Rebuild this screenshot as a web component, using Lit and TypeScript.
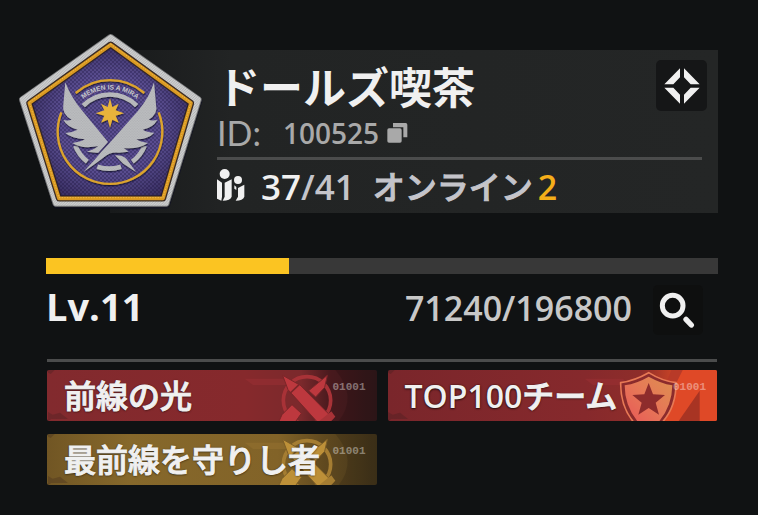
import { LitElement, html, css, svg, nothing } from "lit";
import { customElement, property } from "lit/decorators.js";

type Tone = "red" | "orange" | "gold";

@customElement("team-emblem")
class TeamEmblem extends LitElement {
  static styles = css`
    :host { display: block; }
    svg { display: block; width: 100%; height: 100%; overflow: visible; }
    .motto { font: 700 20px "Liberation Sans", sans-serif; fill: #c6c7c9; }
  `;
  render() {
    return html`
      <svg viewBox="24 24 552 528" role="img" aria-label="Team emblem">
        <defs>
          <pattern id="weave" width="12" height="12" patternUnits="userSpaceOnUse">
            <rect width="12" height="12" fill="#4d4081"></rect>
            <path d="M0 3h6M6 9h6" stroke="#5e5295" stroke-width="4"></path>
            <path d="M6 3h6M0 9h6" stroke="#3d3369" stroke-width="3"></path>
          </pattern>
          <pattern id="thread" width="8" height="8" patternUnits="userSpaceOnUse">
            <rect width="8" height="8" fill="#cfd0d0"></rect>
            <path d="M0 8L8 0" stroke="#a2a3a4" stroke-width="2"></path>
          </pattern>
          <pattern id="feather" width="8" height="8" patternUnits="userSpaceOnUse">
            <rect width="8" height="8" fill="#bcbec0"></rect>
            <path d="M0 2h4M4 6h4" stroke="#a5a7ab" stroke-width="2"></path>
          </pattern>
          <radialGradient id="shade" cx="50%" cy="52%" r="58%">
            <stop offset="0.55" stop-color="#1a1236" stop-opacity="0"></stop>
            <stop offset="1" stop-color="#1a1236" stop-opacity="0.6"></stop>
          </radialGradient>
          <filter id="relief" x="-10%" y="-10%" width="120%" height="120%">
            <feDropShadow dx="1" dy="4" stdDeviation="2" flood-color="#120c28" flood-opacity="0.75"></feDropShadow>
          </filter>
          <path id="mottoArc" d="M206 236A125 125 0 0 1 394 236"></path>
        </defs>
        <g stroke-linejoin="round" filter="url(#relief)">
          <path d="M302 36L566 223L469 536H137L36 223Z" fill="#77787a" stroke="#77787a" stroke-width="18"></path>
          <path d="M302 36L566 223L469 536H137L36 223Z" fill="url(#thread)" stroke="url(#thread)" stroke-width="13"></path>
          <path d="M302 59L543 234L459 520H147L58 234Z" fill="url(#weave)" stroke="#3b2c25" stroke-width="19"></path>
          <path d="M302 59L543 234L459 520H147L58 234Z" fill="url(#shade)" stroke="#d99820" stroke-width="11"></path>
          <path d="M302 57L543 232L459 518H147L58 232Z" fill="none" stroke="#f0bc4b" stroke-width="3" stroke-dasharray="4 4"></path>
        </g>
        <g fill="none" filter="url(#relief)">
          <path d="M154 262A157 157 0 1 0 446 262M197 204A157 157 0 0 1 403 204" stroke="#dba32d" stroke-width="7"></path>
          <path d="M220 242A112 112 0 0 1 380 242" stroke="url(#feather)" stroke-width="14"></path>
          <path d="M196 362A112 112 0 0 0 232 410M262 425A112 112 0 0 0 333 425M367 410A112 112 0 0 0 404 362" stroke="url(#feather)" stroke-width="14"></path>
        </g>
        <text class="motto"><textPath href="#mottoArc" startOffset="50%" text-anchor="middle">MEMEN IS A MIRA</textPath></text>
        <path filter="url(#relief)" fill="#e8b33a" d="M300 220L307 246L326 236L317 256L342 265L317 272L326 293L307 284L300 308L293 284L273 293L283 272L257 265L283 256L273 236L293 246Z"></path>
        <g fill="url(#feather)" filter="url(#relief)">
          <path d="M166 172Q183 218 218 259L294 351L267 384L230 380Q252 374 265 363Q215 373 187 354Q211 351 225 343Q184 340 166 324Q188 322 203 314Q173 307 160 285Q174 288 185 284Q155 267 160 239Z"></path>
          <path d="M315 391Q340 390 350 403L378 441L340 416Z"></path>
          <path d="M432 172Q418 218 383 259L298 355Q272 382 254 404L220 441Q254 418 280 398Q300 380 326 383L356 380L341 369Q387 373 414 354Q391 351 379 343Q415 342 433 323Q411 322 398 314Q428 309 442 285Q425 288 416 284Q445 266 438 239Z"></path>
        </g>
        <path d="M296 353L265 386" stroke="#3f3568" stroke-width="4"></path>
      </svg>`;
  }
}

@customElement("honor-tag")
class HonorTag extends LitElement {
  @property() label = "";
  @property() tone: Tone = "red";

  static styles = css`
    :host { display: block; min-width: 0; }
    .tag {
      position: relative; display: flex; align-items: center; height: 51px;
      padding: 0 17px; border-radius: 2px; overflow: hidden; color: #f0f0f0;
      font: 500 32px/50px "Open Sans", "Noto Sans CJK JP", sans-serif;
      white-space: nowrap;
    }
    .red { background: linear-gradient(90deg, #822a2e, #86292c 60%, #7b292c 77%, #48191d 86%, #32191b); }
    .orange { background: linear-gradient(90deg, #7a262b, #86292c 60%, #8e2d2a 77%, #d44825 89%, #e54a22 93%); }
    .gold { background: linear-gradient(90deg, #715624, #86682b 25%, #826328 70%, #60491f 84%, #43351b); }
    .art { position: absolute; right: 0; top: 0; width: 329px; height: 51px; }
    .text { position: relative; text-shadow: 0 0 2px #0009, 0 1px 2px #0009; -webkit-text-stroke: 1px #f0f0f0; }
    .latin { font-weight: 600; -webkit-text-stroke: 0; }
    .code {
      position: absolute; right: 11px; top: 10px; color: #ffffff66;
      font: 700 11px/14px "Liberation Mono", monospace;
    }
  `;

  private blades() {
    const main = this.tone === "gold" ? "#bd9038" : "#bd383e";
    const edge = this.tone === "gold" ? "#a57d32" : "#a83237";
    const gap = this.tone === "gold" ? "#7d5e27" : "#7b2629";
    return svg`
      <circle cx="777" cy="91" r="71" fill="none" stroke=${edge} stroke-width="11"></circle>
      <path d="M838 16L830 52L803 81L782 62Z" fill=${main} stroke=${gap} stroke-width="3"></path>
      <path d="M732 104L760 130L742 156H692L702 134Z" fill=${main} stroke=${gap} stroke-width="3"></path>
      <path d="M704 16L748 41L755 44L856 146L846 156H808L730 70L720 59Z" fill=${main} stroke=${gap} stroke-width="3"></path>
      <path d="M727 69L754 43" stroke=${gap} stroke-width="5"></path>
      <path d="M814 153L850 124L862 140L846 156Z" fill=${edge}></path>`;
  }

  private shield() {
    return svg`
      <path d="M808 153L884 0H990V153Z" fill="#df4927"></path>
      <path d="M808 153L884 0H850L790 153Z" fill="#b83a28"></path>
      <path d="M872 153L935 62V153Z" fill="#a83423"></path>
      <path d="M782 8Q822 33 864 38Q865 112 820 160H740Q697 112 698 38Q740 32 782 8Z" fill="#8b2b2c" stroke="#e77955" stroke-width="5"></path>
      <path d="M782 20Q818 40 853 46Q852 111 810 158H752Q710 111 710 46Q748 40 782 20Z" fill="url(#shieldFill)"></path>
      <path d="M782 39L795 73L831 75L803 98L813 134L782 114L751 134L761 98L733 75L769 73Z" fill="#8d2c2c"></path>`;
  }

  render() {
    const parts = this.label.split(/([A-Z0-9]+)/).filter(Boolean);
    return html`
      <div class="tag ${this.tone}">
        <svg class="art" viewBox="0 0 987 153" aria-hidden="true">
          <defs>
            <linearGradient id="shieldFill" x1="0" y1="1" x2="1" y2="0">
              <stop offset="0" stop-color="#e85757"></stop>
              <stop offset="0.5" stop-color="#e67757"></stop>
              <stop offset="1" stop-color="#dd9050"></stop>
            </linearGradient>
          </defs>
          <path d="M590 26H705L725 45H615Z" fill=${this.tone === "gold" ? "#95712f" : "#9b3034"} opacity="0.5"></path>
          <path d="M0 0H20L8 12L0 8ZM0 126L14 134L36 128L60 147H10L0 153Z" fill="#301c1c" opacity="0.25"></path>
          ${this.tone === "orange"
            ? nothing
            : svg`<path d="M862 0H987V153H872Q930 80 862 0Z" fill="#000" opacity="0.13"></path>`}
          ${this.tone === "orange" ? this.shield() : this.blades()}
        </svg>
        <span class="code">01001</span>
        <span class="text">${parts.map((p) => (/[A-Z0-9]/.test(p) ? html`<span class="latin">${p}</span>` : p))}</span>
      </div>`;
  }
}

@customElement("app-root")
class AppRoot extends LitElement {
  private points = 71240;
  private goal = 196800;
  private tags: { label: string; tone: Tone }[] = [
    { label: "前線の光", tone: "red" },
    { label: "TOP100チーム", tone: "orange" },
    { label: "最前線を守りし者", tone: "gold" },
  ];

  static styles = css`
    :host {
      display: block; box-sizing: border-box; min-height: 100vh;
      padding: 50px 40px 28px 46px; background: #101213; color: #f0f0f0;
      font-family: "Open Sans", "Noto Sans CJK JP", sans-serif;
      white-space: nowrap;
    }
    h1 { margin: 0; }
    button {
      display: grid; place-items: center; padding: 0; border: 0;
      color: #f0f0f0; background: none; flex: none; cursor: pointer;
    }
    svg { display: block; fill: currentColor; overflow: visible; }
    .card {
      position: relative; margin-left: 64px; padding: 10px 11px 0 107px;
      background: linear-gradient(90deg, #181a1b, #222424 20%, #242626);
    }
    .emblem {
      position: absolute; left: -92px; top: -17px; width: 184px; height: 176px;
    }
    .title { display: flex; justify-content: space-between; height: 51px; }
    h1 { font: 700 43px/58px "Liberation Sans", "Noto Sans CJK JP", sans-serif; }
    .square { width: 51px; height: 51px; border-radius: 5px; background: #151617; }
    .ident {
      display: flex; align-items: center; height: 49px; padding-bottom: 3px; box-sizing: border-box;
      margin-right: 5px; border-bottom: 3px solid #4b4c4c; color: #a9a9a9;
    }
    .key { font: 400 34px/40px Lato, sans-serif; width: 66px; }
    .id { font-size: 28px; line-height: 38px; font-weight: 600; }
    .copy { color: inherit; margin-left: 8px; }
    .members { display: flex; align-items: center; height: 53px; line-height: 48px; }
    .count { margin-left: 16px; font-size: 35px; font-weight: 600; }
    .dim { color: #c4c4ca; }
    .online { margin-left: 18px; font-size: 32px; font-weight: 500; color: #c4c4ca; -webkit-text-stroke: 1px #c4c4ca; }
    .now { margin-left: 5px; font-size: 34px; font-weight: 600; color: #f5ae19; }
    progress {
      display: block; appearance: none; width: 100%; height: 16px; margin-top: 45px;
      border: 0; background: #383838;
    }
    progress::-webkit-progress-bar { background: #383838; }
    progress::-webkit-progress-value { background: #fbc422; }
    .level {
      display: flex; align-items: flex-start; height: 50px; margin-top: 11px;
      padding-right: 15px;
    }
    .lv { flex: 1; font-size: 38px; line-height: 42px; font-weight: 700; }
    .points { font-size: 34px; line-height: 46px; font-weight: 600; color: #c8c8c8; }
    .search { width: 50px; height: 50px; margin-left: 21px; background: #0e0f0f; border-radius: 5px; }
    .tags {
      display: grid; grid-template-columns: 1fr 1fr; gap: 13px 11px;
      margin: 24px 1px 0; padding-top: 8px; border-top: 3px solid #4b4c4c;
    }
  `;

  render() {
    return html`
      <main>
        <section class="card">
          <team-emblem class="emblem"></team-emblem>
          <div class="title">
            <h1>ドールズ喫茶</h1>
            <button class="square" aria-label="Details">
              <svg width="36" height="36" viewBox="0 0 108 108" aria-hidden="true">
                <path d="M48 1V28L28 49H1ZM60 1L107 49H80L60 28ZM1 59H28L48 80V107ZM60 80L80 59H107L60 107Z"></path>
              </svg>
            </button>
          </div>
          <div class="ident">
            <span class="key">ID:</span><span class="id">100525</span>
            <button class="copy" aria-label="Copy ID">
              <svg width="21" height="20" viewBox="0 0 63 60" aria-hidden="true">
                <rect x="1" y="16" width="43" height="43" rx="5"></rect>
                <path d="M18 0H56Q61 0 61 5V43H49V13H18Z"></path>
              </svg>
            </button>
          </div>
          <div class="members">
            <svg width="28" height="34" viewBox="-2 0 84 102" aria-hidden="true">
              <circle cx="21" cy="12" r="15"></circle>
              <circle cx="61" cy="30" r="12"></circle>
              <path d="M-2 28L13 38V80L11 92L-2 86ZM42 28V80Q38 92 15 92L21 80V38ZM50 46L56 51V60L50 56ZM80 44V80Q76 92 54 92L61 80V54Z"></path>
            </svg>
            <span class="count">37<span class="dim">/41</span></span>
            <span class="online">オンライン</span><span class="now">2</span>
          </div>
        </section>
        <progress aria-label="Level progress" value=${this.points} max=${this.goal}></progress>
        <div class="level">
          <span class="lv">Lv.11</span>
          <span class="points">${this.points}/${this.goal}</span>
          <button class="search" aria-label="Search">
            <svg width="36" height="36" viewBox="0 0 108 108" aria-hidden="true">
              <circle cx="38" cy="41" r="31" fill="none" stroke="currentColor" stroke-width="15"></circle>
              <path d="M78 82L94 99" fill="none" stroke="currentColor" stroke-width="16" stroke-linecap="round"></path>
            </svg>
          </button>
        </div>
        <div class="tags">
          ${this.tags.map((t) => html`<honor-tag .label=${t.label} .tone=${t.tone}></honor-tag>`)}
        </div>
      </main>`;
  }
}
